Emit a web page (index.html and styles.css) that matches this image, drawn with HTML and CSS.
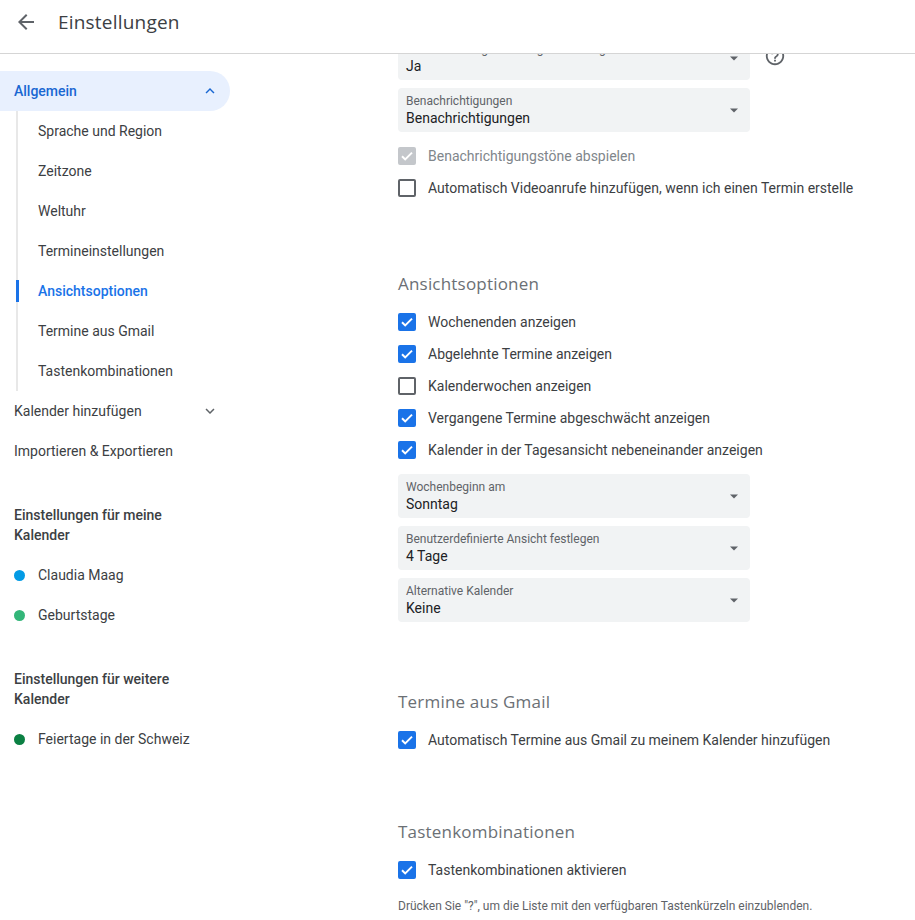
FILE: index.html
```html
<!DOCTYPE html>
<html lang="de">
<head>
<meta charset="utf-8">
<title>Einstellungen</title>
<link rel="stylesheet" href="styles.css">
</head>
<body>
<header class="topbar">
  <svg class="back" width="24" height="24" viewBox="0 0 24 24"><path d="M20 11H7.83l5.59-5.59L12 4l-8 8 8 8 1.41-1.41L7.83 13H20v-2z" fill="#5f6368"/></svg>
  <h1 class="title">Einstellungen</h1>
</header>
<div class="layout">
  <nav class="sidebar">
    <div class="nav-item nav-open">
      <span>Allgemein</span>
      <svg class="chev" width="20" height="20" viewBox="0 0 24 24"><path d="M7.41 15.41L12 10.83l4.59 4.58L18 14l-6-6-6 6z" fill="#1967d2"/></svg>
    </div>
    <ul class="sublist">
      <li>Sprache und Region</li>
      <li>Zeitzone</li>
      <li>Weltuhr</li>
      <li>Termineinstellungen</li>
      <li class="active">Ansichtsoptionen</li>
      <li>Termine aus Gmail</li>
      <li>Tastenkombinationen</li>
    </ul>
    <div class="nav-item">
      <span>Kalender hinzufügen</span>
      <svg class="chev" width="20" height="20" viewBox="0 0 24 24"><path d="M7.41 8.59L12 13.17l4.59-4.58L18 10l-6 6-6-6z" fill="#5f6368"/></svg>
    </div>
    <div class="nav-item"><span>Importieren &amp; Exportieren</span></div>
    <div class="nav-heading">Einstellungen für meine Kalender</div>
    <div class="cal-item"><span class="dot dot-blue"></span>Claudia Maag</div>
    <div class="cal-item"><span class="dot dot-green"></span>Geburtstage</div>
    <div class="nav-heading">Einstellungen für weitere Kalender</div>
    <div class="cal-item"><span class="dot dot-dark"></span>Feiertage in der Schweiz</div>
  </nav>
  <main class="content">
    <div class="scroll">
      <div class="select-row">
        <div class="select">
          <div class="sel-label">Standardmäßig Einladungen hinzufügen</div>
          <div class="sel-value">Ja</div>
          <svg class="drop" width="24" height="24" viewBox="0 0 24 24"><path d="M8 10.5l4 4 4-4z" fill="#5f6368"/></svg>
        </div>
        <svg class="help" width="22" height="22" viewBox="0 0 24 24"><path d="M11 18h2v-2h-2v2zm1-16C6.48 2 2 6.48 2 12s4.48 10 10 10 10-4.48 10-10S17.52 2 12 2zm0 18c-4.41 0-8-3.59-8-8s3.59-8 8-8 8 3.59 8 8-3.59 8-8 8zm0-14c-2.21 0-4 1.79-4 4h2c0-1.1.9-2 2-2s2 .9 2 2c0 2-3 1.75-3 5h2c0-2.25 3-2.5 3-5 0-2.21-1.79-4-4-4z" fill="#5f6368"/></svg>
      </div>
      <div class="select">
        <div class="sel-label">Benachrichtigungen</div>
        <div class="sel-value">Benachrichtigungen</div>
        <svg class="drop" width="24" height="24" viewBox="0 0 24 24"><path d="M8 10.5l4 4 4-4z" fill="#5f6368"/></svg>
      </div>
      <div class="checks first-checks">
        <div class="check disabled"><span class="box on"><svg viewBox="0 0 18 18"><path d="M4 9.2l3.2 3.2L14 5.6" fill="none" stroke="#fff" stroke-width="2"/></svg></span>Benachrichtigungstöne abspielen</div>
        <div class="check"><span class="box"></span>Automatisch Videoanrufe hinzufügen, wenn ich einen Termin erstelle</div>
      </div>

      <section class="section">
        <h2 class="sec-title">Ansichtsoptionen</h2>
        <div class="checks">
          <div class="check"><span class="box on"><svg viewBox="0 0 18 18"><path d="M4 9.2l3.2 3.2L14 5.6" fill="none" stroke="#fff" stroke-width="2"/></svg></span>Wochenenden anzeigen</div>
          <div class="check"><span class="box on"><svg viewBox="0 0 18 18"><path d="M4 9.2l3.2 3.2L14 5.6" fill="none" stroke="#fff" stroke-width="2"/></svg></span>Abgelehnte Termine anzeigen</div>
          <div class="check"><span class="box"></span>Kalenderwochen anzeigen</div>
          <div class="check"><span class="box on"><svg viewBox="0 0 18 18"><path d="M4 9.2l3.2 3.2L14 5.6" fill="none" stroke="#fff" stroke-width="2"/></svg></span>Vergangene Termine abgeschwächt anzeigen</div>
          <div class="check"><span class="box on"><svg viewBox="0 0 18 18"><path d="M4 9.2l3.2 3.2L14 5.6" fill="none" stroke="#fff" stroke-width="2"/></svg></span>Kalender in der Tagesansicht nebeneinander anzeigen</div>
        </div>
        <div class="selects">
          <div class="select">
            <div class="sel-label">Wochenbeginn am</div>
            <div class="sel-value">Sonntag</div>
            <svg class="drop" width="24" height="24" viewBox="0 0 24 24"><path d="M8 10.5l4 4 4-4z" fill="#5f6368"/></svg>
          </div>
          <div class="select">
            <div class="sel-label">Benutzerdefinierte Ansicht festlegen</div>
            <div class="sel-value">4 Tage</div>
            <svg class="drop" width="24" height="24" viewBox="0 0 24 24"><path d="M8 10.5l4 4 4-4z" fill="#5f6368"/></svg>
          </div>
          <div class="select">
            <div class="sel-label">Alternative Kalender</div>
            <div class="sel-value">Keine</div>
            <svg class="drop" width="24" height="24" viewBox="0 0 24 24"><path d="M8 10.5l4 4 4-4z" fill="#5f6368"/></svg>
          </div>
        </div>
      </section>

      <section class="section">
        <h2 class="sec-title">Termine aus Gmail</h2>
        <div class="checks">
          <div class="check"><span class="box on"><svg viewBox="0 0 18 18"><path d="M4 9.2l3.2 3.2L14 5.6" fill="none" stroke="#fff" stroke-width="2"/></svg></span>Automatisch Termine aus Gmail zu meinem Kalender hinzufügen</div>
        </div>
      </section>

      <section class="section section-last">
        <h2 class="sec-title">Tastenkombinationen</h2>
        <div class="checks">
          <div class="check"><span class="box on"><svg viewBox="0 0 18 18"><path d="M4 9.2l3.2 3.2L14 5.6" fill="none" stroke="#fff" stroke-width="2"/></svg></span>Tastenkombinationen aktivieren</div>
        </div>
        <p class="note">Drücken Sie "?", um die Liste mit den verfügbaren Tastenkürzeln einzublenden.</p>
      </section>
    </div>
  </main>
</div>
</body>
</html>
```
FILE: styles.css
```css
* { box-sizing: border-box; }
html, body { margin: 0; padding: 0; }
body {
  font-family: Roboto, "Liberation Sans", sans-serif;
  color: #3c4043;
  background: #fff;
  width: 915px;
  height: 920px;
  overflow: hidden;
}
.topbar {
  height: 54px;
  display: flex;
  align-items: center;
  padding: 0 0 9px 14px;
  border-bottom: 1px solid #d5d5d5;
  background: #fff;
  position: relative;
  z-index: 2;
}
.back { flex: none; }
.title {
  margin: 0 0 0 20px;
  font-family: "Open Sans", Roboto, sans-serif;
  font-weight: 400;
  font-size: 19px;
  color: #3c4043;
  letter-spacing: 0.2px;
}
.layout {
  display: flex;
  height: 866px;
}
.sidebar {
  width: 256px;
  flex: none;
  padding-top: 17px;
  font-size: 14px;
}
.nav-item {
  height: 40px;
  width: 230px;
  display: flex;
  align-items: center;
  justify-content: space-between;
  padding: 0 11px 0 14px;
  color: #3c4043;
}
.chev { width: 18px; height: 18px; }
.nav-open {
  background: #e8f0fe;
  border-radius: 0 20px 20px 0;
  color: #1967d2;
  font-weight: 500;
}
.sublist {
  list-style: none;
  margin: 0 0 0 16px;
  padding: 0;
  border-left: 2px solid #e8e8e8;
}
.sublist li {
  height: 40px;
  line-height: 40px;
  padding-left: 20px;
  position: relative;
}
.sublist li.active {
  color: #1a73e8;
  font-weight: 500;
}
.sublist li.active::before {
  content: "";
  position: absolute;
  left: -2px;
  top: 9px;
  height: 22px;
  width: 3px;
  background: #1a73e8;
}
.nav-heading {
  margin-top: 34px;
  margin-bottom: 10px;
  padding-left: 14px;
  width: 200px;
  font-weight: 500;
  line-height: 20px;
  color: #3c4043;
}
.cal-item {
  height: 40px;
  display: flex;
  align-items: center;
  padding-left: 14px;
}
.dot {
  width: 11px;
  height: 11px;
  border-radius: 50%;
  margin-right: 13px;
}
.dot-blue { background: #039be5; }
.dot-green { background: #33b679; }
.dot-dark { background: #0b8043; }

.content {
  flex: 1;
  overflow: hidden;
  padding-left: 142px;
}
.scroll { margin-top: -18px; }
.select-row {
  display: flex;
  align-items: flex-start;
}
.help { margin: 9px 0 0 14px; flex: none; }
.select {
  width: 352px;
  height: 44px;
  background: #f1f3f4;
  border-radius: 4px;
  padding: 5px 8px 0;
  position: relative;
  margin-bottom: 8px;
}
.sel-label {
  font-size: 12px;
  line-height: 16px;
  color: #5f6368;
}
.sel-value {
  font-size: 14px;
  line-height: 18px;
  color: #202124;
}
.drop {
  position: absolute;
  right: 4px;
  top: 10px;
}
.checks { display: flex; flex-direction: column; }
.check {
  height: 32px;
  display: flex;
  align-items: center;
  font-size: 14px;
  color: #3c4043;
}
.check.disabled { color: #80868b; }
.box {
  width: 18px;
  height: 18px;
  border: 2px solid #5f6368;
  border-radius: 2px;
  margin-right: 12px;
  flex: none;
  display: flex;
}
.box.on {
  background: #1a73e8;
  border-color: #1a73e8;
}
.box svg { width: 18px; height: 18px; margin: -2px; }
.disabled .box.on { background: #c4c7cb; border-color: #c4c7cb; }
.section { margin-top: 68px; }
.section-last { margin-top: 64px; }
.sec-title {
  margin: 0 0 10px;
  font-family: "Open Sans", Roboto, sans-serif;
  font-weight: 400;
  font-size: 17px;
  line-height: 24px;
  color: #6b7075;
  letter-spacing: 0.2px;
}
.selects { margin-top: 8px; }
.note {
  margin: 12px 0 0;
  font-size: 12px;
  line-height: 16px;
  color: #5f6368;
}
```
